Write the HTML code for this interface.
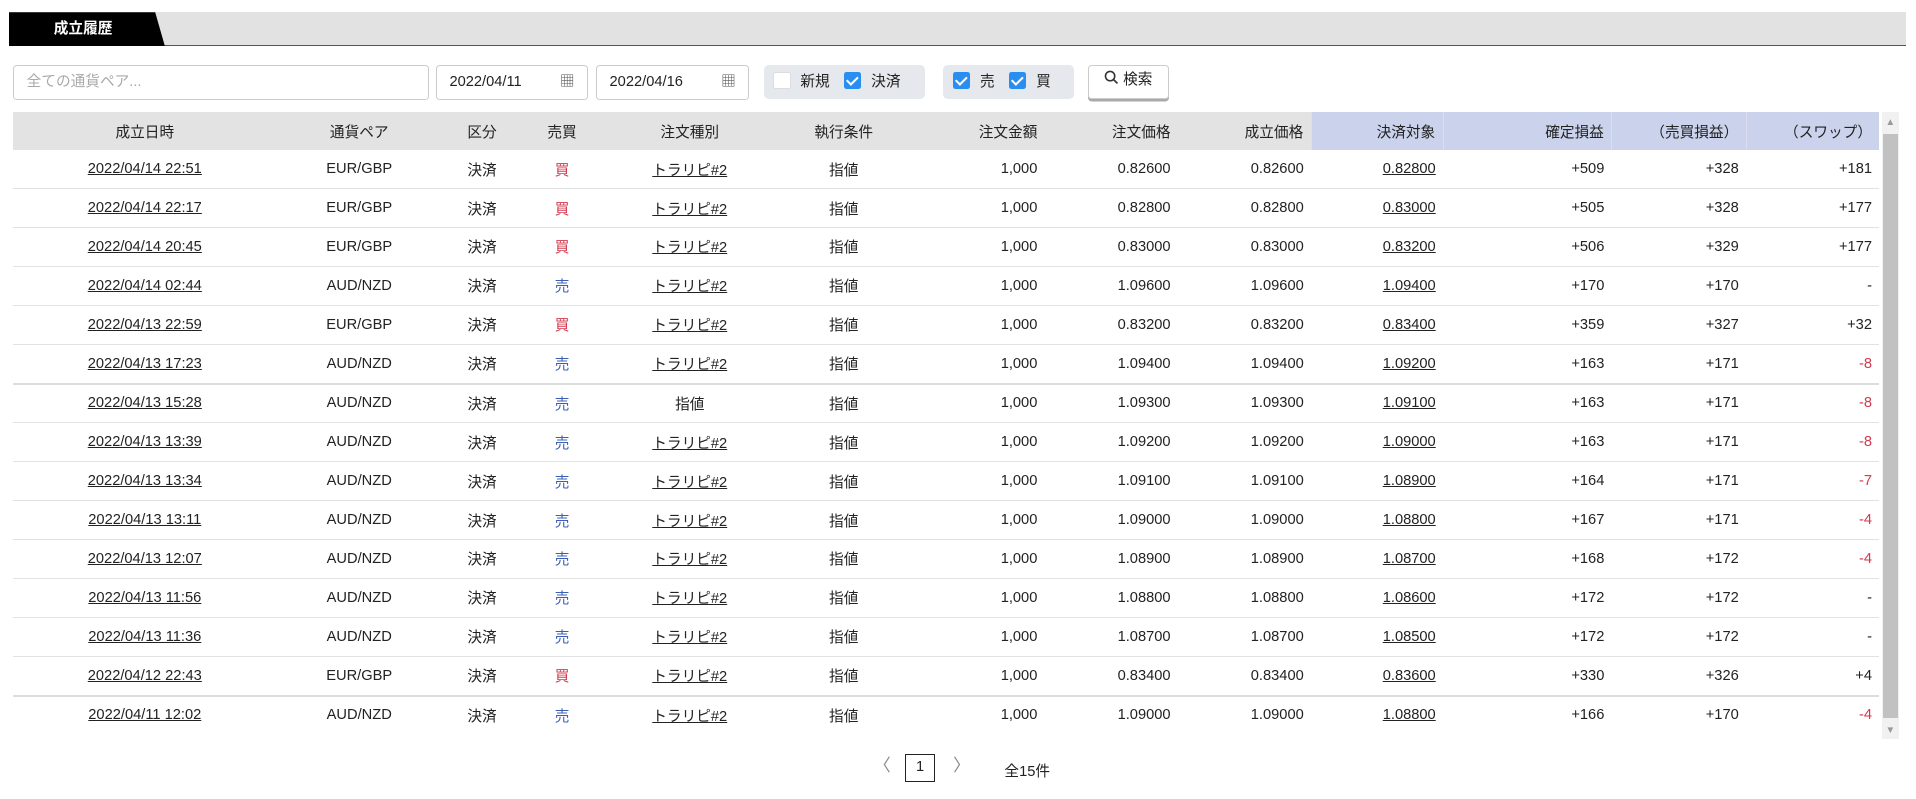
<!DOCTYPE html>
<html><head><meta charset="utf-8"><style>
html,body{margin:0;padding:0;background:#fff;overflow:hidden}
body{width:1916px;height:799px}
#w{zoom:1.22194;width:1568px;height:654px;position:relative;font-family:"Liberation Sans","Noto Sans CJK JP",sans-serif;color:#222;font-size:12px}
.bar{position:absolute;left:7px;top:10px;width:1553px;height:27px;background:#e2e2e2;border-bottom:1px solid #555}
.tab{position:absolute;left:7px;top:10px;height:28px;width:128px;background:#000;clip-path:polygon(0 0,120px 0,128px 28px,0 28px);color:#fff;font-weight:bold;font-size:12px;line-height:28px;padding-left:37px;box-sizing:border-box}
.in{position:absolute;top:53px;height:29px;border:1px solid #ccc;box-sizing:border-box;border-radius:3px;line-height:27px;font-size:12px;padding-left:10px}
.grp{position:absolute;top:53px;height:28px;background:#e5e8ec;border-radius:4px;font-size:12px;line-height:28px}
.cb{display:inline-block;width:14px;height:14px;border-radius:2px;vertical-align:-3px;margin-right:8px;box-sizing:border-box}
.on{background:#2a8ef0;position:relative}
.on:after{content:"";position:absolute;left:4px;top:1.5px;width:4px;height:7px;border:solid #fff;border-width:0 2px 2px 0;transform:rotate(45deg)}
.off{background:#fff;border:1px solid #ddd}
.btn{position:absolute;left:890px;top:53px;width:67px;height:28px;border:1px solid #ccc;border-radius:3px;box-shadow:0 2px 0 #aaa;box-sizing:border-box;line-height:24px;text-align:center;font-size:12px}
table{position:absolute;left:11px;top:92px;border-collapse:collapse;table-layout:fixed;width:1527px}
th{height:31px;background:#e3e3e3;font-weight:normal;font-size:12px;padding:0 6px}
th.b{background:#cbd3ec;border-left:1px solid #dde}
td{height:31px;border-bottom:1px solid #e2e2e2;font-size:12px;padding:0 6px;text-align:center}
.r{text-align:right}
td.u,span.u{text-decoration:underline}
.R{color:#d23a4e}.B{color:#3b5fb5}
tr.t td{border-bottom:2px solid #ddd}
.sb{position:absolute;left:1540px;top:92px;width:14px;height:513px;background:#f1f1f1}
.th{position:absolute;left:1541px;top:110px;width:12px;height:478px;background:#c1c1c1}
.pg{position:absolute;top:617px;font-size:12px}
</style></head><body><div id="w">
<div class="bar"></div><div class="tab">成立履歴</div>
<div class="in" style="left:11px;width:340px;color:#aaa">全ての通貨ペア...</div>
<div class="in" style="left:357px;width:124px">2022/04/11<span style="position:absolute;right:10px;color:#555">▦</span></div>
<div class="in" style="left:488px;width:125px">2022/04/16<span style="position:absolute;right:10px;color:#555">▦</span></div>
<div class="grp" style="left:625px;width:132px;padding-left:8px;box-sizing:border-box"><span class="cb off"></span>新規<span style="display:inline-block;width:12px"></span><span class="cb on"></span>決済</div>
<div class="grp" style="left:772px;width:107px;padding-left:8px;box-sizing:border-box"><span class="cb on"></span>売<span style="display:inline-block;width:12px"></span><span class="cb on"></span>買</div>
<div class="btn"><svg width="12" height="12" viewBox="0 0 12 12" style="vertical-align:-1px"><circle cx="5" cy="5" r="3.8" fill="none" stroke="#333" stroke-width="1.3"/><path d="M8 8l3 3" stroke="#333" stroke-width="1.4"/></svg> 検索</div>
<table>
<colgroup><col style="width:215px"><col style="width:136px"><col style="width:65px"><col style="width:66px"><col style="width:143px"><col style="width:109px"><col style="width:110px"><col style="width:109px"><col style="width:109px"><col style="width:108px"><col style="width:138px"><col style="width:110px"><col style="width:109px"></colgroup>
<tr><th>成立日時</th><th>通貨ペア</th><th>区分</th><th>売買</th><th>注文種別</th><th>執行条件</th><th class="r">注文金額</th><th class="r">注文価格</th><th class="r">成立価格</th><th class="r b">決済対象</th><th class="r b">確定損益</th><th class="r b">（売買損益）</th><th class="r b">（スワップ）</th></tr>
<tr><td class="u">2022/04/14 22:51</td><td>EUR/GBP</td><td>決済</td><td class="R">買</td><td class="u">トラリピ#2</td><td>指値</td><td class="r">1,000</td><td class="r">0.82600</td><td class="r">0.82600</td><td class="r"><span class="u">0.82800</span></td><td class="r">+509</td><td class="r">+328</td><td class="r">+181</td></tr>
<tr><td class="u">2022/04/14 22:17</td><td>EUR/GBP</td><td>決済</td><td class="R">買</td><td class="u">トラリピ#2</td><td>指値</td><td class="r">1,000</td><td class="r">0.82800</td><td class="r">0.82800</td><td class="r"><span class="u">0.83000</span></td><td class="r">+505</td><td class="r">+328</td><td class="r">+177</td></tr>
<tr><td class="u">2022/04/14 20:45</td><td>EUR/GBP</td><td>決済</td><td class="R">買</td><td class="u">トラリピ#2</td><td>指値</td><td class="r">1,000</td><td class="r">0.83000</td><td class="r">0.83000</td><td class="r"><span class="u">0.83200</span></td><td class="r">+506</td><td class="r">+329</td><td class="r">+177</td></tr>
<tr><td class="u">2022/04/14 02:44</td><td>AUD/NZD</td><td>決済</td><td class="B">売</td><td class="u">トラリピ#2</td><td>指値</td><td class="r">1,000</td><td class="r">1.09600</td><td class="r">1.09600</td><td class="r"><span class="u">1.09400</span></td><td class="r">+170</td><td class="r">+170</td><td class="r">-</td></tr>
<tr><td class="u">2022/04/13 22:59</td><td>EUR/GBP</td><td>決済</td><td class="R">買</td><td class="u">トラリピ#2</td><td>指値</td><td class="r">1,000</td><td class="r">0.83200</td><td class="r">0.83200</td><td class="r"><span class="u">0.83400</span></td><td class="r">+359</td><td class="r">+327</td><td class="r">+32</td></tr>
<tr class="t"><td class="u">2022/04/13 17:23</td><td>AUD/NZD</td><td>決済</td><td class="B">売</td><td class="u">トラリピ#2</td><td>指値</td><td class="r">1,000</td><td class="r">1.09400</td><td class="r">1.09400</td><td class="r"><span class="u">1.09200</span></td><td class="r">+163</td><td class="r">+171</td><td class="r R">-8</td></tr>
<tr><td class="u">2022/04/13 15:28</td><td>AUD/NZD</td><td>決済</td><td class="B">売</td><td>指値</td><td>指値</td><td class="r">1,000</td><td class="r">1.09300</td><td class="r">1.09300</td><td class="r"><span class="u">1.09100</span></td><td class="r">+163</td><td class="r">+171</td><td class="r R">-8</td></tr>
<tr><td class="u">2022/04/13 13:39</td><td>AUD/NZD</td><td>決済</td><td class="B">売</td><td class="u">トラリピ#2</td><td>指値</td><td class="r">1,000</td><td class="r">1.09200</td><td class="r">1.09200</td><td class="r"><span class="u">1.09000</span></td><td class="r">+163</td><td class="r">+171</td><td class="r R">-8</td></tr>
<tr><td class="u">2022/04/13 13:34</td><td>AUD/NZD</td><td>決済</td><td class="B">売</td><td class="u">トラリピ#2</td><td>指値</td><td class="r">1,000</td><td class="r">1.09100</td><td class="r">1.09100</td><td class="r"><span class="u">1.08900</span></td><td class="r">+164</td><td class="r">+171</td><td class="r R">-7</td></tr>
<tr><td class="u">2022/04/13 13:11</td><td>AUD/NZD</td><td>決済</td><td class="B">売</td><td class="u">トラリピ#2</td><td>指値</td><td class="r">1,000</td><td class="r">1.09000</td><td class="r">1.09000</td><td class="r"><span class="u">1.08800</span></td><td class="r">+167</td><td class="r">+171</td><td class="r R">-4</td></tr>
<tr><td class="u">2022/04/13 12:07</td><td>AUD/NZD</td><td>決済</td><td class="B">売</td><td class="u">トラリピ#2</td><td>指値</td><td class="r">1,000</td><td class="r">1.08900</td><td class="r">1.08900</td><td class="r"><span class="u">1.08700</span></td><td class="r">+168</td><td class="r">+172</td><td class="r R">-4</td></tr>
<tr><td class="u">2022/04/13 11:56</td><td>AUD/NZD</td><td>決済</td><td class="B">売</td><td class="u">トラリピ#2</td><td>指値</td><td class="r">1,000</td><td class="r">1.08800</td><td class="r">1.08800</td><td class="r"><span class="u">1.08600</span></td><td class="r">+172</td><td class="r">+172</td><td class="r">-</td></tr>
<tr><td class="u">2022/04/13 11:36</td><td>AUD/NZD</td><td>決済</td><td class="B">売</td><td class="u">トラリピ#2</td><td>指値</td><td class="r">1,000</td><td class="r">1.08700</td><td class="r">1.08700</td><td class="r"><span class="u">1.08500</span></td><td class="r">+172</td><td class="r">+172</td><td class="r">-</td></tr>
<tr class="t"><td class="u">2022/04/12 22:43</td><td>EUR/GBP</td><td>決済</td><td class="R">買</td><td class="u">トラリピ#2</td><td>指値</td><td class="r">1,000</td><td class="r">0.83400</td><td class="r">0.83400</td><td class="r"><span class="u">0.83600</span></td><td class="r">+330</td><td class="r">+326</td><td class="r">+4</td></tr>
<tr><td class="u" style="border:0">2022/04/11 12:02</td><td style="border:0">AUD/NZD</td><td style="border:0">決済</td><td class="B" style="border:0">売</td><td class="u" style="border:0">トラリピ#2</td><td style="border:0">指値</td><td class="r" style="border:0">1,000</td><td class="r" style="border:0">1.09000</td><td class="r" style="border:0">1.09000</td><td class="r" style="border:0"><span class="u">1.08800</span></td><td class="r" style="border:0">+166</td><td class="r" style="border:0">+170</td><td class="r R" style="border:0">-4</td></tr>
</table>
<div class="sb"></div><div class="th"></div>
<div style="position:absolute;left:1543px;top:96px;font-size:8px;color:#999">▲</div>
<div style="position:absolute;left:1543px;top:593px;font-size:8px;color:#999">▼</div>
<div class="pg" style="left:715px;color:#888;font-size:14px;top:615px">〈</div>
<div class="pg" style="left:741px;top:617px;width:24px;height:23px;border:1px solid #222;box-sizing:border-box;text-align:center;line-height:21px">1</div>
<div class="pg" style="left:780px;color:#888;font-size:14px;top:615px">〉</div>
<div class="pg" style="left:822px;top:622px">全15件</div>
</div></body></html>
